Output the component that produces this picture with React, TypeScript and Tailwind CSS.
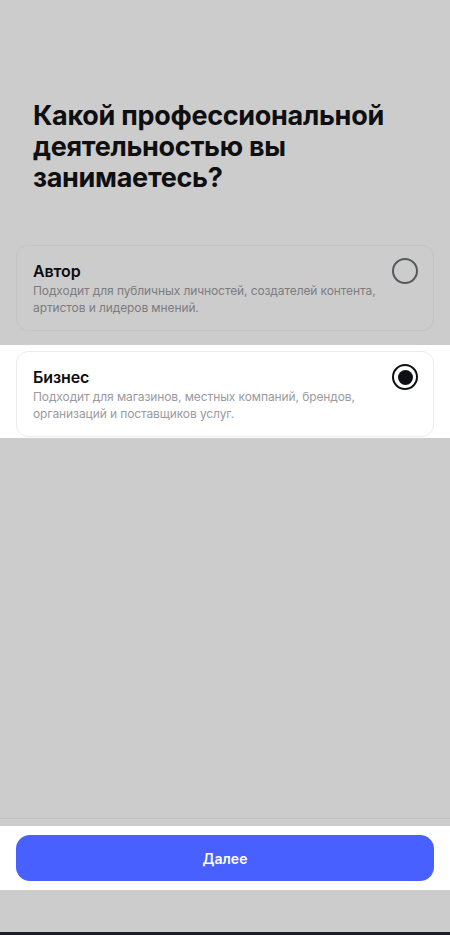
import { useState } from "react";

type Option = {
  id: string;
  title: string;
  description: string;
};

const options: Option[] = [
  {
    id: "author",
    title: "Автор",
    description: "Подходит для публичных личностей, создателей контента, артистов и лидеров мнений.",
  },
  {
    id: "business",
    title: "Бизнес",
    description: "Подходит для магазинов, местных компаний, брендов, организаций и поставщиков услуг.",
  },
];

const Radio = ({ checked }: { checked: boolean }) =>
  checked ? (
    <span className="flex size-[26px] shrink-0 items-center justify-center rounded-full border-[2.5px] border-[#0e1015]">
      <span className="size-[15px] rounded-full bg-[#0e1015]" />
    </span>
  ) : (
    <span className="size-[26px] shrink-0 rounded-full border-2 border-[#55585d]" />
  );

const OptionCard = ({
  option,
  checked,
  onSelect,
}: {
  option: Option;
  checked: boolean;
  onSelect: () => void;
}) => (
  <button
    type="button"
    onClick={onSelect}
    className={
      checked
        ? "mx-4 flex items-start gap-3 rounded-xl border border-[#ececec] bg-white pt-[12px] pb-[14px] pr-[15px] pl-4 text-left"
        : "mx-4 flex items-start gap-3 rounded-xl border border-[#c4c4c4] pt-[12px] pb-[14px] pr-[15px] pl-4 text-left"
    }
  >
    <div className="flex-1 pt-[2px]">
      <div className="text-[16px] leading-[22px] font-semibold tracking-[-0.1px] text-[#0d0d0f]">
        {option.title}
      </div>
      <p
        className={
          checked
            ? "text-[12px] leading-[17px] tracking-[-0.1px] text-[#9a9aa0]"
            : "text-[12px] leading-[17px] tracking-[-0.1px] text-[#7c7c80]"
        }
      >
        {option.description}
      </p>
    </div>
    <Radio checked={checked} />
  </button>
);

export default function App() {
  const [selected, setSelected] = useState("business");

  return (
    <div className="flex h-[935px] w-full flex-col bg-[#cccccc] font-['Inter','Noto_Sans',sans-serif]">
      <main className="flex flex-1 flex-col">
        <h1 className="mt-[100px] pr-6 pl-[33px] text-[27px] leading-[31px] font-bold tracking-[-0.3px] text-[#0f0f11]">
          Какой профессиональной деятельностью вы занимаетесь?
        </h1>

        <div className="mt-[52px] flex flex-col">
          <OptionCard
            option={options[0]}
            checked={selected === options[0].id}
            onSelect={() => setSelected(options[0].id)}
          />
          <div className="mt-[14px] bg-white pt-[6px] pb-px">
            <OptionCard
              option={options[1]}
              checked={selected === options[1].id}
              onSelect={() => setSelected(options[1].id)}
            />
          </div>
        </div>
      </main>

      <footer className="border-t border-[#c2c2c2] pt-[7px]">
        <div className="bg-white px-4 py-[9px]">
          <button
            type="button"
            className="h-[46px] w-full rounded-[14px] bg-[#4760ff] text-[14px] font-semibold text-white"
          >
            Далее
          </button>
        </div>
        <div className="h-[42px]" />
      </footer>
      <div className="h-[3px] bg-[#1c1f26]" />
    </div>
  );
}
